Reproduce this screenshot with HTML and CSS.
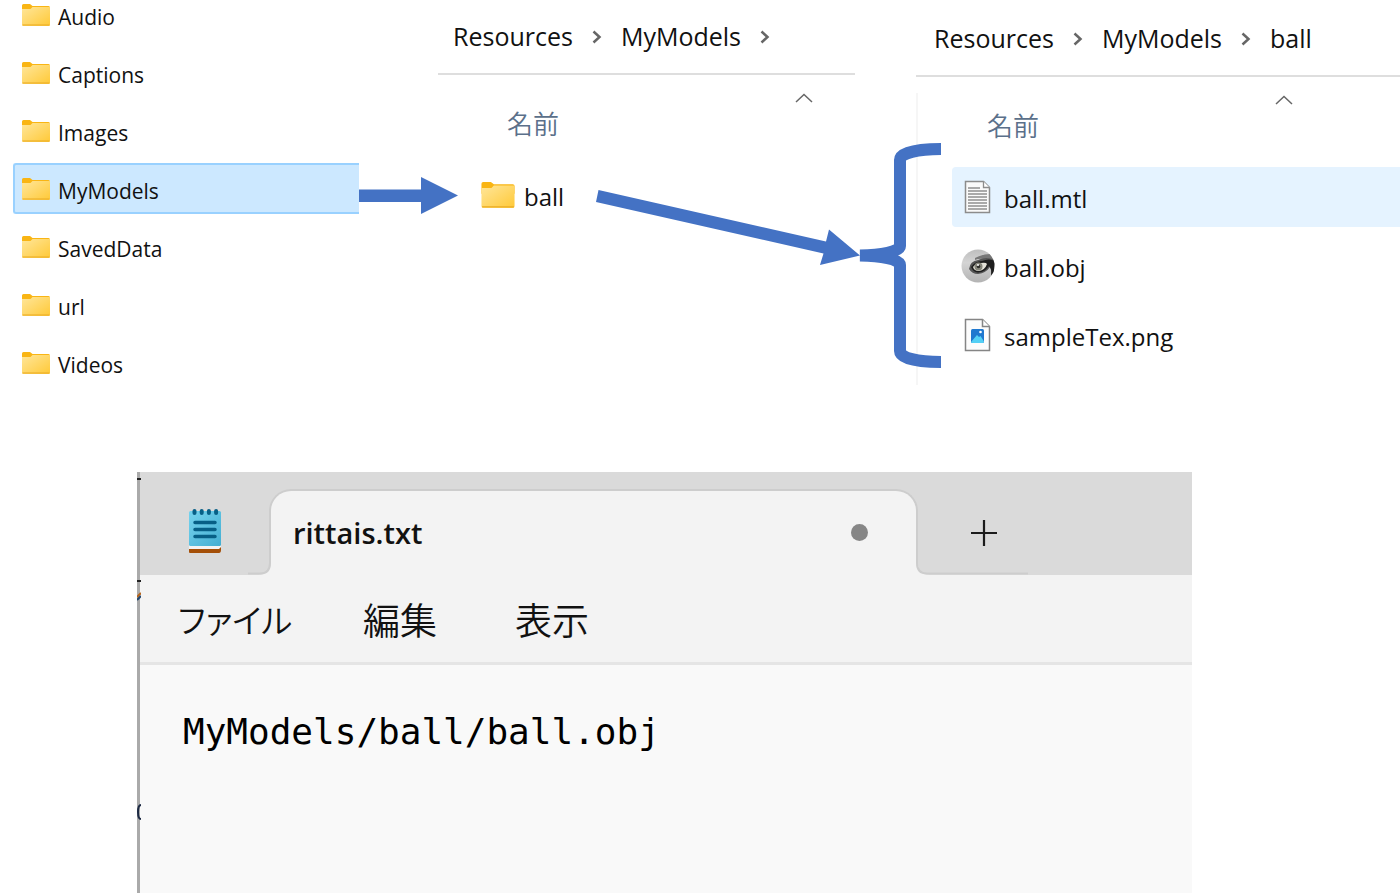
FILE: index.html
```html
<!DOCTYPE html>
<html lang="ja">
<head>
  <meta charset="UTF-8" />
  <meta name="viewport" content="width=device-width, initial-scale=1.0"/>
  <title>rittais.txt - MyModels</title>
  <link rel="stylesheet" href="styles.css">
</head>
<body>
  <!-- shared icons -->
  <svg class="defs" width="0" height="0" aria-hidden="true">
    <defs>
      <linearGradient id="folderFill" x1="0" y1="0" x2="1" y2="1">
        <stop offset="0" stop-color="#ffe69a"/>
        <stop offset="1" stop-color="#ffc937"/>
      </linearGradient>
      <symbol id="folder" viewBox="0 0 28 22">
        <path d="M0 1.500Q0 0 1.500 0H8L10.500 2H26.500Q28 2 28 3.500V10H0Z" fill="#f9b514"/>
        <path d="M0 5H8.500L10.500 3H28V20.500Q28 22 26.500 22H1.500Q0 22 0 20.500Z" fill="url(#folderFill)"/>
        <path d="M.5 21H27.500" stroke="#edb12c" stroke-width="1.200"/>
      </symbol>
      <symbol id="chevron" viewBox="0 0 10 14">
        <path d="M1.500 1.500L7.500 7L1.500 12.500" fill="none" stroke="#666" stroke-width="2.500"/>
      </symbol>
      <symbol id="sort" viewBox="0 0 18 10">
        <path d="M1 9L9 1.500L17 9" fill="none" stroke="#666" stroke-width="1.500"/>
      </symbol>
    </defs>
  </svg>

  <main class="explorer">
    <ul class="tree">
      <li><a href="#"><svg class="folder"><use href="#folder"/></svg>Audio</a></li>
      <li><a href="#"><svg class="folder"><use href="#folder"/></svg>Captions</a></li>
      <li><a href="#"><svg class="folder"><use href="#folder"/></svg>Images</a></li>
      <li><a href="#" class="active"><svg class="folder"><use href="#folder"/></svg>MyModels</a></li>
      <li><a href="#"><svg class="folder"><use href="#folder"/></svg>SavedData</a></li>
      <li><a href="#"><svg class="folder"><use href="#folder"/></svg>url</a></li>
      <li><a href="#"><svg class="folder"><use href="#folder"/></svg>Videos</a></li>
    </ul>

    <section class="panel models">
      <nav class="crumbs">
        <a href="#">Resources</a>
        <svg class="chevron"><use href="#chevron"/></svg>
        <a href="#">MyModels</a>
        <svg class="chevron"><use href="#chevron"/></svg>
      </nav>
      <div class="pane">
        <button class="column-name"><span>名前</span><svg class="sort"><use href="#sort"/></svg></button>
        <ul class="files">
          <li><a href="#"><svg class="file-icon folder-large"><use href="#folder"/></svg>ball</a></li>
        </ul>
      </div>
    </section>

    <section class="panel ball">
      <nav class="crumbs">
        <a href="#">Resources</a>
        <svg class="chevron"><use href="#chevron"/></svg>
        <a href="#">MyModels</a>
        <svg class="chevron"><use href="#chevron"/></svg>
        <a href="#">ball</a>
      </nav>
      <div class="pane">
        <button class="column-name"><span>名前</span><svg class="sort"><use href="#sort"/></svg></button>
        <ul class="files">
          <li>
            <a href="#" class="active">
              <svg class="file-icon" viewBox="0 0 34 34">
                <path d="M4.500 1.500H22.500L28.500 7.500V32.500H4.500Z" fill="#fafafa" stroke="#8c8c8c" stroke-width="1.500"/>
                <path d="M22.500 1.500V7.500H28.500" fill="#fff" stroke="#8c8c8c" stroke-width="1.300"/>
                <path d="M7 8H19M7 11H26M7 14H26M7 17H26M7 20H26M7 23H26M7 26H26M7 29H26" stroke="#8f8f8f" stroke-width="1.300"/>
              </svg>
              ball.mtl
            </a>
          </li>
          <li>
            <a href="#">
              <svg class="file-icon" viewBox="0 0 34 34">
                <defs>
                  <linearGradient id="skin" x1="0" y1="0" x2="0" y2="1">
                    <stop offset="0" stop-color="#bdbdbd"/>
                    <stop offset=".4" stop-color="#d4d4d4"/>
                    <stop offset="1" stop-color="#b2b2b2"/>
                  </linearGradient>
                  <clipPath id="round"><circle cx="17" cy="17" r="16.500"/></clipPath>
                </defs>
                <g clip-path="url(#round)">
                  <rect width="34" height="34" fill="url(#skin)"/>
                  <path d="M14 9Q22 5 29 5L34 12V16L25 10Q18 9 14 11Z" fill="#777"/>
                  <path d="M8 20Q9 12 17 11Q25 7 34 11L33 24L30 27Q31 21 29 18Q25 24 17 25Q11 25 8 20Z" fill="#555"/>
                  <path d="M10 18Q14 12 21 12Q28 9 34 12L33 23L30 26Q31 20 28 17Q24 23 17 23.500Q12 23 10 18Z" fill="#1e1e1e"/>
                  <path d="M12 18Q15 14 20 14Q25 13 26 15Q24 21 18 22Q13 22 12 18Z" fill="#e4e2d8"/>
                  <circle cx="17.500" cy="17.500" r="4" fill="#85857a"/>
                  <circle cx="17.500" cy="17.500" r="1.800" fill="#2d2d2a"/>
                  <circle cx="17" cy="16" r="1" fill="#fff"/>
                </g>
              </svg>
              ball.obj
            </a>
          </li>
          <li>
            <a href="#">
              <svg class="file-icon" viewBox="0 0 34 34">
                <path d="M4.500 1.500H21.500L28.500 8.500V32.500H4.500Z" fill="#fcfcfc" stroke="#858585" stroke-width="1.500"/>
                <path d="M21.500 1.500V8.500H28.500" fill="#fff" stroke="#858585" stroke-width="1.500"/>
                <rect x="10" y="11" width="13" height="14" rx="1.500" fill="#1f78cf"/>
                <path d="M10 24L16 17L18 19L19.500 18L23 23.500Q22.500 25 21.500 25H11.500Q10 25 10 24Z" fill="#54d0f5"/>
                <circle cx="19.500" cy="14" r="1.300" fill="#fff"/>
              </svg>
              sampleTex.png
            </a>
          </li>
        </ul>
      </div>
    </section>

    <!-- arrows and brace over the panels -->
    <svg class="arrows" viewBox="0 0 1400 400" fill="#4472c4" aria-hidden="true">
      <path d="M359 189.500H421V177L458 195.500L421 214V202H359Z"/>
      <path d="M598.500 190L826 241.500L829 229.500L860 255.500L820 265L823.500 253.500L596 202Z"/>
      <path d="M941 149C918 149 900 153 900 160V246C900 252 880 255 860 255.500C880 256 900 259 900 265V351C900 358 918 362 941 362" fill="none" stroke="#4472c4" stroke-width="12"/>
    </svg>
  </main>

  <section class="notepad">
    <svg class="edge" viewBox="0 0 4 421" aria-hidden="true">
      <path d="M0 7H4M0 109H4" stroke="#222" stroke-width="2"/>
      <path d="M0 125L4 121" stroke="#b5651d" stroke-width="2"/>
      <path d="M0 128L4 124" stroke="#23466e" stroke-width="2"/>
      <path d="M4 333Q1 333 1 340Q1 347 4 347" fill="none" stroke="#1d2a44" stroke-width="2"/>
    </svg>

    <div class="titlebar">
      <svg class="app-icon" viewBox="0 0 34 46">
        <defs>
          <linearGradient id="page" x1="0" y1="0" x2="1" y2="1">
            <stop offset="0" stop-color="#76d3ee"/>
            <stop offset="1" stop-color="#43aed2"/>
          </linearGradient>
        </defs>
        <rect x="1" y="36" width="32" height="5" fill="#f3f3f3"/>
        <path d="M1 41H31L33 39V42Q33 45 31 45H2Q1 45 1 44Z" fill="#a44f08"/>
        <rect x="1" y="3" width="32" height="35" rx="1.500" fill="url(#page)"/>
        <path d="M6.500 3V5M13.700 3V5M20.900 3V5M28.100 3V5" stroke="#075f86" stroke-width="4" stroke-linecap="round"/>
        <path d="M7 14.500H27M7 21.500H27M7 28.500H27" stroke="#075f86" stroke-width="3.500" stroke-linecap="round"/>
      </svg>
      <div class="tab">
        <svg class="foot foot-left" viewBox="0 0 24 16" aria-hidden="true">
          <path d="M22 0H24V16H10Q22 16 22 4Z" fill="#f3f3f3"/>
          <path d="M0 14.500H12Q22 14.500 22 4V0" fill="none" stroke="#cdcdcd" stroke-width="2"/>
        </svg>
        <span>rittais.txt</span>
        <i class="unsaved"></i>
        <svg class="foot foot-right" viewBox="0 0 112 16" aria-hidden="true">
          <path d="M0 0H2V4Q2 16 14 16H0Z" fill="#f3f3f3"/>
          <path d="M1 0V4Q1 14.500 11 14.500H112" fill="none" stroke="#cdcdcd" stroke-width="2"/>
        </svg>
      </div>
      <button class="new-tab" aria-label="新しいタブ">
        <svg viewBox="0 0 28 28"><path d="M14 1V27M1 14H27" stroke="#1b1b1b" stroke-width="2.200"/></svg>
      </button>
    </div>

    <div class="menu">
      <button class="kana">ファイル</button>
      <button>編集</button>
      <button>表示</button>
    </div>

    <textarea class="editor" aria-label="rittais.txt" spellcheck="false">MyModels/ball/ball.obj</textarea>
  </section>
</body>
</html>
```

FILE: styles.css
```css
* {
  margin: 0;
  padding: 0;
  box-sizing: border-box;
}

body {
  display: flex;
  flex-direction: column;
  height: 100vh;
  overflow: hidden;
  background-color: #fff;
  color: #111;
  font-family: "Open Sans", "Noto Sans CJK JP", sans-serif;
}

.defs {
  position: absolute;
}

a {
  color: inherit;
  text-decoration: none;
}

ul {
  list-style: none;
}

button {
  border: none;
  background: none;
  color: inherit;
  font-family: inherit;
  cursor: pointer;
}

/* explorer */
.explorer {
  position: relative;
  display: grid;
  grid-template-columns: 438fr 478fr 484fr;
  flex: 0 0 472px;
}

.arrows {
  position: absolute;
  top: 0;
  left: 0;
  width: 100%;
  pointer-events: none;
}

/* the list is scrolled a little past its first row */
.tree {
  display: flex;
  flex-direction: column;
  gap: 7px;
  margin: -11px 79px 0 13px;
  font-size: 21px;
}

.tree a {
  display: flex;
  align-items: center;
  gap: 8px;
  height: 51px;
  padding: 4px 0 0 7px;
  border: 2px solid transparent;
  border-right: none;
  border-radius: 3px 0 0 3px;
  line-height: 28px;
}

.tree a.active {
  background-color: #cce8ff;
  border-color: #99d1ff;
}

.folder {
  width: 28px;
  height: 22px;
  margin-bottom: 4px;
}

.models {
  padding-right: 61px;
}

.ball {
  padding-top: 2px;
}

.crumbs {
  display: flex;
  align-items: center;
  gap: 19px;
  height: 75px;
  padding: 0 0 2px 15px;
  border-bottom: 2px solid #dedede;
  font-size: 25px;
}

.ball .crumbs {
  padding-left: 18px;
}

.chevron {
  width: 10px;
  height: 14px;
  margin-top: 2px;
}

.pane {
  margin-top: 16px;
  padding-bottom: 20px;
}

.ball .pane {
  border-left: 2px solid #f6f6f6;
}

.column-name {
  display: flex;
  align-items: flex-start;
  gap: 236px;
  height: 74px;
  padding-left: 69px;
  color: #5b708a;
  font-size: 26px;
  font-weight: 300;
  line-height: 64px;
}

.column-name span {
  font-family: "Noto Sans CJK JP", sans-serif;
  font-weight: 350;
}

.sort {
  width: 18px;
  height: 10px;
  margin-top: 2px;
}

.files {
  display: flex;
  flex-direction: column;
  gap: 9px;
  margin-left: 34px;
}

.files a {
  display: flex;
  align-items: center;
  gap: 9px;
  height: 60px;
  padding: 2px 0 0 9px;
  border-radius: 4px 0 0 4px;
  font-size: 24px;
}

.files a.active {
  background-color: #e5f3ff;
}

.file-icon {
  width: 34px;
  height: 34px;
  margin-bottom: 2px;
}

.folder-large {
  height: 26px;
}

/* notepad */
.notepad {
  position: relative;
  display: flex;
  flex-direction: column;
  flex: 1;
  margin: 0 208px 0 137px;
  border-left: 3px solid #aaa;
  background-color: #f3f3f3;
}

.edge {
  position: absolute;
  top: 0;
  left: -3px;
  width: 4px;
  height: 421px;
}

.titlebar {
  display: flex;
  height: 103px;
  padding-left: 48px;
  background-color: #dadada;
}

.app-icon {
  width: 34px;
  height: 46px;
  margin-top: 36px;
}

.tab {
  position: relative;
  display: flex;
  align-items: center;
  justify-content: space-between;
  flex: 0 1 649px;
  margin: 17px 0 0 47px;
  padding: 0 48px 2px 22px;
  border: 2px solid #cdcdcd;
  border-bottom: none;
  border-radius: 22px 22px 0 0;
  background-color: #f3f3f3;
  font-size: 29px;
  font-weight: 600;
}

/* curved feet on both sides of the tab */
.foot {
  position: absolute;
  bottom: 0;
  height: 16px;
  background-color: #dadada;
}

.foot-left {
  right: 100%;
  width: 24px;
  margin-right: -1px;
}

.foot-right {
  left: 100%;
  width: 112px;
}

.unsaved {
  width: 17px;
  height: 17px;
  border-radius: 50%;
  background-color: #868686;
}

.new-tab {
  margin: 22px 0 0 52px;
  width: 28px;
}

.menu {
  display: grid;
  grid-template-columns: 185px 152px auto;
  justify-content: start;
  height: 90px;
  padding-left: 38px;
  border-bottom: 3px solid #e5e5e5;
}

.menu button {
  text-align: left;
  font-family: "Noto Sans CJK JP", sans-serif;
  font-size: 37px;
  font-weight: 350;
}

.menu .kana {
  font-size: 33px;
  font-feature-settings: "palt";
}

.editor {
  flex: 1;
  padding: 43px;
  border: none;
  outline: none;
  resize: none;
  background-color: #f9f9f9;
  color: #000;
  font-family: "DejaVu Sans Mono", monospace;
  font-size: 36px;
  line-height: 48px;
}
```
